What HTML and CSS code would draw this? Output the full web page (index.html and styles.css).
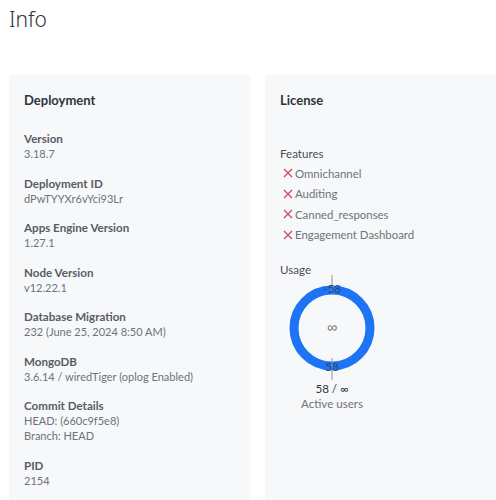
FILE: index.html
```html
<!DOCTYPE html>
<html>
<head>
<meta charset="utf-8">
<link rel="stylesheet" href="styles.css">
</head>
<body>
<header class="page-header"><h1 class="page-title">Info</h1></header>
<main class="cards">
  <section class="card">
    <h2 class="card-title">Deployment</h2>
    <div class="fields">
      <div class="field"><div class="label">Version</div><div class="value">3.18.7</div></div>
      <div class="field"><div class="label">Deployment ID</div><div class="value">dPwTYYXr6vYci93Lr</div></div>
      <div class="field"><div class="label">Apps Engine Version</div><div class="value">1.27.1</div></div>
      <div class="field"><div class="label">Node Version</div><div class="value">v12.22.1</div></div>
      <div class="field"><div class="label">Database Migration</div><div class="value">232 (June 25, 2024 8:50 AM)</div></div>
      <div class="field"><div class="label">MongoDB</div><div class="value">3.6.14 / wiredTiger (oplog Enabled)</div></div>
      <div class="field"><div class="label">Commit Details</div><div class="value">HEAD: (660c9f5e8)</div><div class="value">Branch: HEAD</div></div>
      <div class="field"><div class="label">PID</div><div class="value">2154</div></div>
    </div>
  </section>
  <section class="card">
    <h2 class="card-title">License</h2>
    <div class="license-body">
      <div class="block">
        <div class="sub-label">Features</div>
        <ul class="features">
          <li class="feature"><svg class="x-icon" viewBox="0 0 10 10"><path d="M1 1 L9 9 M9 1 L1 9"/></svg>Omnichannel</li>
          <li class="feature"><svg class="x-icon" viewBox="0 0 10 10"><path d="M1 1 L9 9 M9 1 L1 9"/></svg>Auditing</li>
          <li class="feature"><svg class="x-icon" viewBox="0 0 10 10"><path d="M1 1 L9 9 M9 1 L1 9"/></svg>Canned_responses</li>
          <li class="feature"><svg class="x-icon" viewBox="0 0 10 10"><path d="M1 1 L9 9 M9 1 L1 9"/></svg>Engagement Dashboard</li>
        </ul>
      </div>
      <div class="block usage">
        <div class="sub-label">Usage</div>
        <div class="chart">
          <svg class="donut" width="100" height="106" viewBox="0 0 100 106">
            <circle cx="50" cy="53" r="38" fill="none" stroke="#1d74f5" stroke-width="9"/>
            <line x1="50" y1="0" x2="50" y2="18" stroke="#8e9399" stroke-width="1"/>
            <line x1="50" y1="83" x2="50" y2="105" stroke="#8e9399" stroke-width="1"/>
            <text x="50" y="18" class="ring-label" text-anchor="middle">-58</text>
            <text x="50" y="96" class="ring-label" text-anchor="middle">58</text>
            <text x="50" y="57" class="center-label" text-anchor="middle">∞</text>
          </svg>
          <div class="chart-value">58 / ∞</div>
          <div class="chart-caption">Active users</div>
        </div>
      </div>
    </div>
  </section>
</main>
</body>
</html>
```
FILE: styles.css
```css
html, body {
  margin: 0;
  padding: 0;
  background: #ffffff;
  font-family: Lato, "Noto Sans", sans-serif;
  color: #2f343d;
  overflow: hidden;
}
.page-header {
  padding: 4px 10px 0 9px;
  height: 75px;
  box-sizing: border-box;
}
.page-title {
  margin: 0;
  font-family: "Noto Sans", sans-serif;
  font-size: 21px;
  font-weight: 300;
  line-height: 30px;
  color: #2f343d;
}
.cards {
  display: grid;
  grid-template-columns: 241px 241px;
  gap: 15px;
  padding-left: 9px;
}
.card {
  background: #f7f8fa;
  padding: 15px 15px 30px 15px;
  min-height: 440px;
}
.card-title {
  margin: 0;
  font-size: 13px;
  font-weight: 700;
  line-height: 20px;
  color: #2f343d;
}
.fields {
  display: flex;
  flex-direction: column;
  gap: 14.5px;
  margin-top: 21px;
}
.label {
  font-size: 11.6px;
  line-height: 15px;
  font-weight: 700;
  color: #585d64;
}
.value {
  font-size: 11px;
  line-height: 15px;
  color: #6c737a;
}
.license-body {
  margin-top: 36px;
  display: flex;
  flex-direction: column;
  gap: 17px;
}
.sub-label {
  font-size: 11.6px;
  line-height: 15px;
  color: #4a4f57;
}
.features {
  list-style: none;
  margin: 2px 0 0 0;
  padding: 0;
}
.feature {
  display: flex;
  align-items: center;
  height: 20.5px;
  font-size: 11.4px;
  line-height: 15px;
  color: #6c737a;
}
.x-icon {
  flex: none;
  width: 10px;
  height: 10px;
  margin: 0 2px 0 3px;
  fill: none;
  stroke: #d4476b;
  stroke-width: 1.3;
  shape-rendering: geometricPrecision;
}
.chart {
  display: flex;
  flex-direction: column;
  align-items: center;
  width: 100px;
  margin-left: 2px;
}
.donut {
  display: block;
  margin-top: -2px;
}
.ring-label {
  font-family: Lato, sans-serif;
  font-size: 11.5px;
  fill: #254a7a;
}
.center-label {
  font-family: "Noto Sans", sans-serif;
  font-size: 14px;
  fill: #6c737a;
}
.chart-value {
  font-size: 11.6px;
  line-height: 15px;
  color: #2f343d;
  margin-top: 0;
}
.chart-caption {
  font-size: 11.6px;
  line-height: 15px;
  color: #6c737a;
}
```
